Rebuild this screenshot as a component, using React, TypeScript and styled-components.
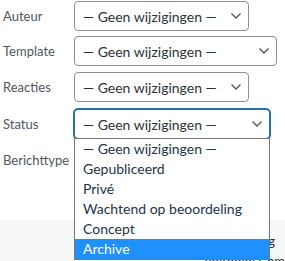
import React from "react";
import styled, { createGlobalStyle } from "styled-components";

const Global = createGlobalStyle`
  html, body { margin: 0; padding: 0; background: #fff; }
  body { font-family: Lato, "Open Sans", sans-serif; overflow: hidden; }
`;

const Page = styled.div`
  position: relative;
  width: 285px;
  height: 261px;
  overflow: hidden;
  display: flex;
  flex-direction: column;
`;

const Form = styled.div`
  display: flex;
  flex-direction: column;
  padding: 1px 0 0 0;
  height: 220px;
  flex-shrink: 0;
  box-sizing: border-box;
`;

const Row = styled.div<{ $mt?: number }>`
  display: grid;
  grid-template-columns: 74px auto;
  align-items: center;
  margin-top: ${(p) => p.$mt ?? 0}px;
  position: relative;
`;

const Label = styled.span`
  font-size: 13px;
  color: #50575e;
  padding-left: 3px;
`;

const Select = styled.div<{ $w: number; $focus?: boolean; $covered?: boolean }>`
  width: ${(p) => p.$w}px;
  height: 30px;
  box-sizing: border-box;
  border: 1px solid ${(p) => (p.$focus ? "#2271b1" : "#8c8f94")};
  box-shadow: ${(p) => (p.$focus ? "0 0 0 1px #2271b1" : "none")};
  border-radius: 4px;
  display: flex;
  align-items: center;
  justify-content: space-between;
  padding: 0 6px 0 8px;
  font-size: 14px;
  color: #2c3338;
  background: #fff;
  visibility: ${(p) => (p.$covered ? "hidden" : "visible")};
`;

const Chevron = () => (
  <svg width="12" height="8" viewBox="0 0 12 8">
    <path d="M1.5 1.5 L6 6 L10.5 1.5" fill="none" stroke="#50575e" strokeWidth="1.4" />
  </svg>
);

const Footer = styled.div`
  flex: 1;
  min-height: 0;
  background: #f6f7f7;
  display: flex;
  flex-direction: column;
  align-items: flex-end;
  padding-top: 11px;
  font-size: 13px;
  color: #2c3338;
  line-height: 20px;
`;

const FooterLine = styled.div<{ $pr: number }>`
  padding-right: ${(p) => p.$pr}px;
  white-space: nowrap;
`;

const List = styled.ul`
  position: absolute;
  left: 74px;
  top: 138px;
  width: 196px;
  margin: 0;
  padding: 0;
  list-style: none;
  box-sizing: border-box;
  border: 1px solid #767676;
  background: #fff;
  z-index: 2;
`;

const Option = styled.li<{ $active?: boolean }>`
  height: 20px;
  line-height: 20px;
  padding-left: 8px;
  font-size: 14px;
  color: ${(p) => (p.$active ? "#fff" : "#23354a")};
  background: ${(p) => (p.$active ? "#1e90ff" : "transparent")};
`;

const NC = "— Geen wijzigingen —";

export default function App() {
  const options = [NC, "Gepubliceerd", "Privé", "Wachtend op beoordeling", "Concept", "Archive"];
  return (
    <Page>
      <Global />
      <Form>
        <Row>
          <Label>Auteur</Label>
          <Select $w={175}>{NC}<Chevron /></Select>
        </Row>
        <Row $mt={5}>
          <Label>Template</Label>
          <Select $w={203}>{NC}<Chevron /></Select>
        </Row>
        <Row $mt={6}>
          <Label>Reacties</Label>
          <Select $w={175}>{NC}<Chevron /></Select>
        </Row>
        <Row $mt={7}>
          <Label>Status</Label>
          <Select $w={196} $focus>{NC}<Chevron /></Select>
        </Row>
        <Row $mt={6}>
          <Label>Berichttype</Label>
          <Select $w={175} $covered>{NC}<Chevron /></Select>
        </Row>
      </Form>
      <Footer>
        <FooterLine $pr={10}>Bijwerken bezig</FooterLine>
        <FooterLine $pr={0}>Voltooid: Com</FooterLine>
      </Footer>
      <List>
        {options.map((o, i) => (
          <Option key={o} $active={i === options.length - 1}>{o}</Option>
        ))}
      </List>
    </Page>
  );
}
